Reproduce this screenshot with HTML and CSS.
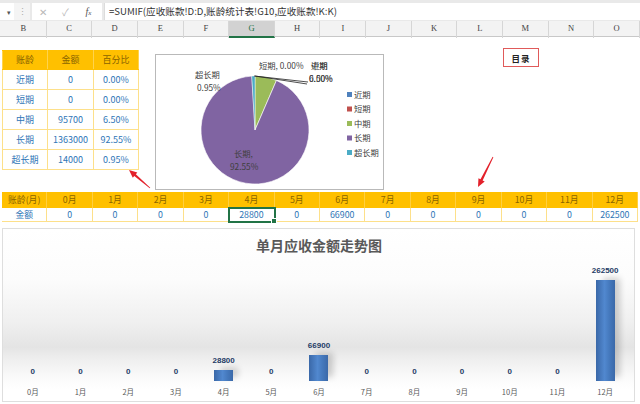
FILE: index.html
```html
<!DOCTYPE html>
<html lang="zh-CN">
<head>
<meta charset="utf-8">
<title>账龄统计表</title>
<link rel="stylesheet" href="styles.css">
</head>
<body>
<div class="app">
  <div class="fbar">
    <div class="namebox"><span class="caret">▾</span></div>
    <div class="fsep">⋮</div>
    <div class="ficons"><span class="ic">✕</span><span class="ic">✓</span><span class="ic fx">f<i>x</i></span></div>
    <div class="finput">=SUMIF(应收账款!D:D,账龄统计表!G10,应收账款!K:K)</div>
  </div>
  <div class="colhdr">
    <div>B</div><div>C</div><div>D</div><div>E</div><div>F</div><div class="sel">G</div><div>H</div><div>I</div><div>J</div><div>K</div><div>L</div><div>M</div><div>N</div><div>O</div>
  </div>
  <div class="sheet">
    <div class="top">
      <table class="aging">
        <tr class="hd"><td>账龄</td><td>金额</td><td>百分比</td></tr>
        <tr><td>近期</td><td>0</td><td>0.00%</td></tr>
        <tr><td>短期</td><td>0</td><td>0.00%</td></tr>
        <tr><td>中期</td><td>95700</td><td>6.50%</td></tr>
        <tr><td>长期</td><td>1363000</td><td>92.55%</td></tr>
        <tr><td>超长期</td><td>14000</td><td>0.95%</td></tr>
      </table>
      <div class="pie">
        <svg width="227" height="134" viewBox="0 0 227 134">
          <path d="M99,75 L99,21 A54,54 0 0 1 120.44,25.44 Z" fill="#9bbb59" stroke="#fff" stroke-width="0.6"/>
          <path d="M99,75 L120.44,25.44 A54,54 0 1 1 95.78,21.10 Z" fill="#8064a2" stroke="#fff" stroke-width="0.6"/>
          <path d="M99,75 L95.78,21.10 A54,54 0 0 1 99,21 Z" fill="#4bacc6" stroke="#fff" stroke-width="0.4"/>
          <line x1="98" y1="21" x2="152" y2="27" stroke="#222" stroke-width="0.8"/>
          <line x1="99" y1="21" x2="151" y2="29" stroke="#222" stroke-width="0.8"/>
          <g class="pl">
            <text x="39" y="23">超长期</text>
            <text x="41" y="36">0.95%</text>
            <text x="103" y="14">短期, 0.00%</text>
            <text x="155" y="14">近期</text>
            <text x="155" y="14">中期</text>
            <text x="153" y="27">0.00%</text>
            <text x="153" y="27">6.50%</text>
            <text x="78" y="102">长期,</text>
            <text x="74" y="115">92.55%</text>
          </g>
          <g class="lg">
            <rect x="191" y="37" width="5" height="5" fill="#4f81bd"/><text x="198" y="42.5">近期</text>
            <rect x="191" y="51.5" width="5" height="5" fill="#c0504d"/><text x="198" y="57">短期</text>
            <rect x="191" y="66" width="5" height="5" fill="#9bbb59"/><text x="198" y="71.5">中期</text>
            <rect x="191" y="80.5" width="5" height="5" fill="#8064a2"/><text x="198" y="86">长期</text>
            <rect x="191" y="95" width="5" height="5" fill="#4bacc6"/><text x="198" y="100.5">超长期</text>
          </g>
        </svg>
      </div>
      <div class="toc">目录</div>
    </div>

    <div class="months">
      <div class="mh">账龄(月)</div><div class="mh">0月</div><div class="mh">1月</div><div class="mh">2月</div><div class="mh">3月</div><div class="mh">4月</div><div class="mh">5月</div><div class="mh">6月</div><div class="mh">7月</div><div class="mh">8月</div><div class="mh">9月</div><div class="mh">10月</div><div class="mh">11月</div><div class="mh">12月</div>
      <div class="md">金额</div><div class="md">0</div><div class="md">0</div><div class="md">0</div><div class="md">0</div><div class="md cur">28800</div><div class="md">0</div><div class="md">66900</div><div class="md">0</div><div class="md">0</div><div class="md">0</div><div class="md">0</div><div class="md">0</div><div class="md">262500</div>
    </div>

    <div class="chart">
      <div class="ctitle">单月应收金额走势图</div>
      <div class="plot">
        <div class="cat"><span class="val">0</span></div>
        <div class="cat"><span class="val">0</span></div>
        <div class="cat"><span class="val">0</span></div>
        <div class="cat"><span class="val">0</span></div>
        <div class="cat"><span class="val">28800</span><span class="bar" style="height:11px"></span></div>
        <div class="cat"><span class="val">0</span></div>
        <div class="cat"><span class="val">66900</span><span class="bar" style="height:26px"></span></div>
        <div class="cat"><span class="val">0</span></div>
        <div class="cat"><span class="val">0</span></div>
        <div class="cat"><span class="val">0</span></div>
        <div class="cat"><span class="val">0</span></div>
        <div class="cat"><span class="val">0</span></div>
        <div class="cat"><span class="val">262500</span><span class="bar big" style="height:101px"></span></div>
      </div>
      <div class="axis">
        <span>0月</span><span>1月</span><span>2月</span><span>3月</span><span>4月</span><span>5月</span><span>6月</span><span>7月</span><span>8月</span><span>9月</span><span>10月</span><span>11月</span><span>12月</span>
      </div>
    </div>
  </div>

  <svg class="arrow a1" width="40" height="35" viewBox="0 0 40 35">
    <polygon points="9,10 17.34,12.55 15.84,14.29 30.26,27.7 29.74,28.3 14.28,16.11 12.79,17.85" fill="#e3212b"/>
  </svg>
  <svg class="arrow a2" width="30" height="42" viewBox="0 0 30 42">
    <polygon points="8,37 14.71,31.4 12.65,30.38 23.36,7.18 22.64,6.82 10.51,29.3 8.45,28.28" fill="#e3212b"/>
  </svg>
</div>
</body>
</html>
```

FILE: styles.css
```css
* { box-sizing: border-box; }
html, body { margin: 0; padding: 0; background: #fff; }
body { font-family: "Noto Sans CJK SC", "Liberation Sans", sans-serif; color: #333; }

.app { position: relative; width: 640px; height: 404px; overflow: hidden; }

/* formula bar */
.fbar {
  display: flex; align-items: stretch;
  height: 21px; padding-top: 3px; padding-bottom: 1px;
  background: #e9e9e9;
}
.namebox { width: 14px; background: #fff; display: flex; align-items: center; justify-content: flex-end; padding-right: 3px; }
.caret { font-size: 7px; color: #555; }
.fsep { width: 16px; display: flex; align-items: center; justify-content: center; font-size: 9px; color: #aaa; background: #f4f4f4; }
.ficons { width: 70px; display: flex; align-items: center; background: #fff; margin-left: 2px; padding-left: 6px; gap: 14px; }
.ic { font-size: 10px; color: #b8b8b8; width: 9px; text-align: center; }
.ic.fx { color: #555; font-family: "Liberation Serif", serif; font-style: italic; font-size: 10px; }
.ic.fx i { font-size: 7px; }
.finput {
  flex: 1; background: #fff; margin-left: 2px;
  font-size: 9.6px; line-height: 17px; padding-left: 4px; color: #333;
  border-left: 1px solid #dcdcdc;
  white-space: nowrap;
}

/* column headers */
.colhdr {
  display: grid; grid-template-columns: repeat(14, 1fr);
  height: 16px; background: #f3f3f3;
  border-bottom: 1px solid #c8c8c8;
  padding-left: 1px;
}
.colhdr div {
  border-right: 1px solid #d6d6d6;
  text-align: center; font-family: "Liberation Serif", serif;
  font-size: 8.5px; line-height: 15px; color: #444;
}
.colhdr div.sel { background: #d2d2d2; border-bottom: 2px solid #217346; color: #217346; }

/* sheet */
.sheet { display: flex; flex-direction: column; }
.top { display: flex; align-items: flex-start; height: 155px; }

.aging {
  border-collapse: collapse; margin-left: 2px; margin-top: 13px;
  font-size: 9px; table-layout: fixed;
}
.aging td {
  border: 1px solid #fde08a; height: 20px; padding: 0;
  text-align: center; color: #2e75b6; line-height: 18px;
}
.aging td:nth-child(1) { width: 45px; }
.aging td:nth-child(2) { width: 46px; }
.aging td:nth-child(3) { width: 45px; }
.aging tr.hd td { background: #ffc000; color: #8a6400; height: 19px; border-color: #ffc000 #ffd34d; }

.pie {
  width: 229px; height: 136px; margin-left: 16px; margin-top: 17px;
  border: 1px solid #b9b9b9; background: #fff;
}
.pie svg { display: block; }
.pie text { font-family: "Noto Sans CJK SC", sans-serif; font-size: 8.3px; fill: #404040; }

.toc {
  margin-left: 119px; margin-top: 11px;
  width: 36px; height: 19px; border: 1.5px solid #e05a5a;
  font-size: 8.5px; font-weight: bold; color: #222; letter-spacing: 1px;
  display: flex; align-items: center; justify-content: center;
}

/* month row */
.months {
  display: grid; grid-template-columns: repeat(14, 1fr);
  grid-template-rows: 16px 14px;
  margin: 0 2px 0 2px;
}
.mh { background: #ffc000; color: #8a6400; font-size: 8.8px; line-height: 16px; text-align: center; border-right: 1px solid #ffcf40; }
.md { border: 1px solid #fde08a; border-top: none; border-left: none; font-size: 8.8px; line-height: 13px; text-align: center; color: #2e75b6; }
.md:first-of-type { border-left: 1px solid #fde08a; }
.md.cur { position: relative; outline: 2px solid #217346; outline-offset: -1px; }
.md.cur::after {
  content: ""; position: absolute; right: -3px; bottom: -3px;
  width: 4px; height: 4px; background: #217346; border: 1px solid #fff;
}

/* bar chart */
.chart {
  margin: 6px 5px 0 2px; height: 174px;
  border: 1px solid #dedede;
  background: linear-gradient(to bottom, #ffffff 0, #fcfcfc 50px, #efefef 95px, #e4e4e4 118px, #ededed 128px, #fafafa 148px, #ffffff 160px, #ffffff 100%);
  display: flex; flex-direction: column;
  padding: 0 5px 0 6px;
}
.ctitle {
  text-align: center; font-size: 14px; font-weight: bold; color: #595959;
  height: 25px; line-height: 18px; padding-top: 7px;
}
.plot { display: grid; grid-template-columns: repeat(13, 1fr); height: 127px; align-items: end; }
.cat { display: flex; flex-direction: column; align-items: center; justify-content: flex-end; }
.val {
  font-family: "Liberation Sans", sans-serif; font-weight: bold; font-size: 8px;
  color: #1f3c66; line-height: 10px; margin-bottom: 4px;
}
.bar {
  width: 19px;
  background: linear-gradient(to right, #3a68a8, #5188cf 45%, #4579bd 70%, #3b69a9);
  box-shadow: 6px -3px 6px -1px rgba(0,0,0,0.18);
}
.axis { display: grid; grid-template-columns: repeat(13, 1fr); padding-top: 5px; }
.axis span { text-align: center; font-size: 7.5px; line-height: 12px; color: #595959; }

/* annotation arrows */
.arrow { position: absolute; }
.a1 { left: 120px; top: 160px; }
.a2 { left: 470px; top: 150px; }
```
